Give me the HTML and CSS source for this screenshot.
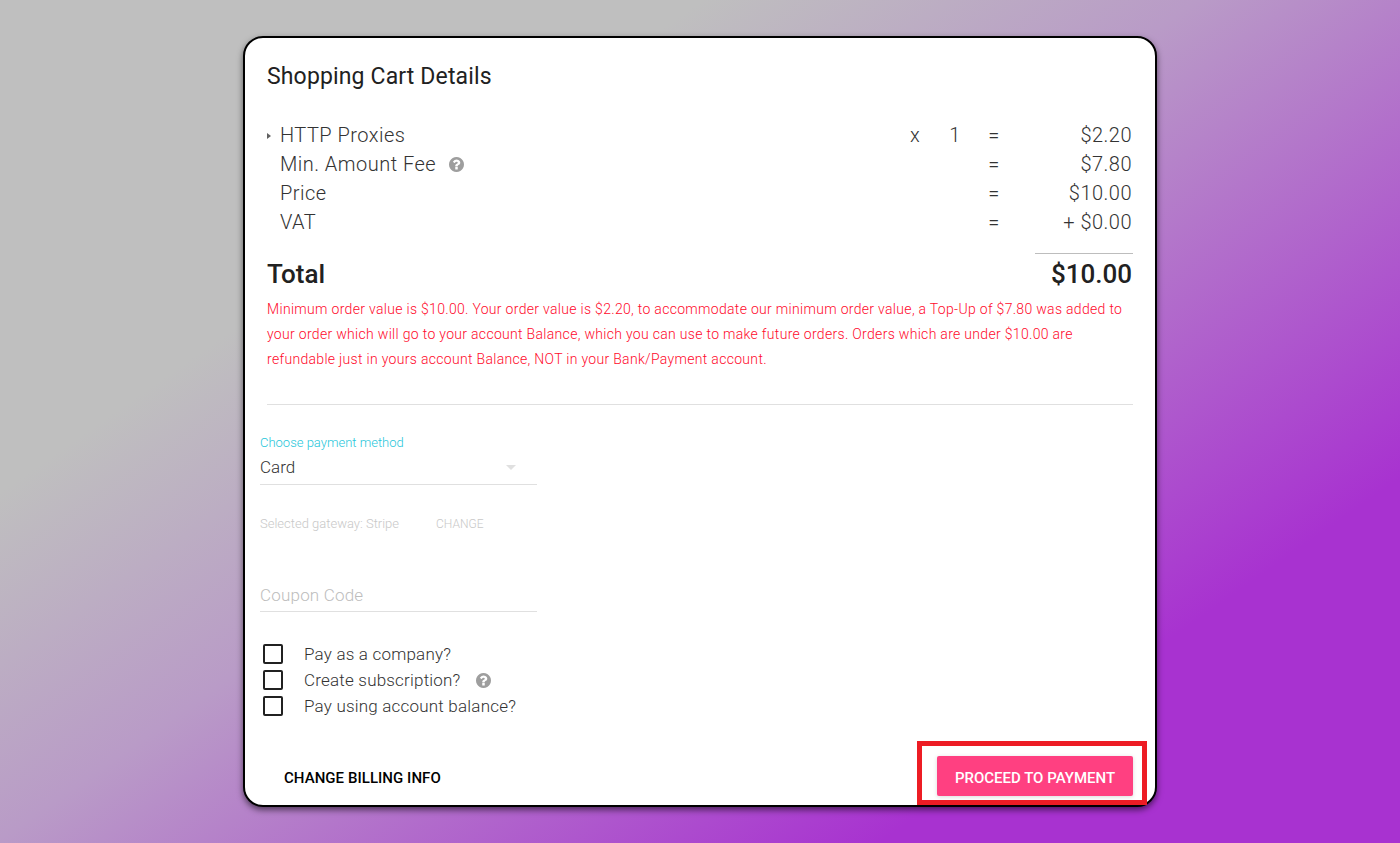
FILE: index.html
```html
<!DOCTYPE html>
<html lang="en">
<head>
<meta charset="utf-8">
<title>Shopping Cart Details</title>
<link rel="stylesheet" href="styles.css">
</head>
<body>
<main class="card">
  <h1 class="title">Shopping Cart Details</h1>
  <div class="lines">
    <div class="line">
      <span class="label"><svg class="caret" viewBox="0 0 4 6"><path d="M0 0l4 3-4 3z"/></svg>HTTP Proxies</span>
      <span class="times">x</span><span class="qty">1</span><span class="eq">=</span><span class="amount">$2.20</span>
    </div>
    <div class="line">
      <span class="label">Min. Amount Fee<svg class="help help-fee" viewBox="128 128 1536 1536"><path d="M1024 1376v-192q0-14-9-23t-23-9h-192q-14 0-23 9t-9 23v192q0 14 9 23t23 9h192q14 0 23-9t9-23zm256-672q0-88-55.500-163t-138.500-116-170-41q-243 0-371 213-15 24 8 42l132 100q7 6 19 6 16 0 25-12 53-68 86-92 34-24 86-24 48 0 85.500 26t37.500 59q0 38-20 61t-68 45q-63 28-115.500 86.500t-52.500 125.500v36q0 14 9 23t23 9h192q14 0 23-9t9-23q0-19 21.500-49.500t54.500-49.500q32-18 49-28.500t46-35 44.500-48 28-60.500 12.500-81zm384 192q0 209-103 385.500t-279.500 279.500-385.500 103-385.500-103-279.500-279.500-103-385.500 103-385.500 279.500-279.500 385.500-103 385.500 103 279.500 279.500 103 385.500z"/></svg></span>
      <span class="times"></span><span class="qty"></span><span class="eq">=</span><span class="amount">$7.80</span>
    </div>
    <div class="line">
      <span class="label">Price</span>
      <span class="times"></span><span class="qty"></span><span class="eq">=</span><span class="amount">$10.00</span>
    </div>
    <div class="line">
      <span class="label">VAT</span>
      <span class="times"></span><span class="qty"></span><span class="eq">=</span><span class="amount">+ $0.00</span>
    </div>
  </div>
  <div class="total-rule"></div>
  <div class="total"><span>Total</span><span class="total-value">$10.00</span></div>
  <p class="notice">Minimum order value is $10.00. Your order value is $2.20, to accommodate our minimum order value, a Top-Up of $7.80 was added to your order which will go to your account Balance, which you can use to make future orders. Orders which are under $10.00 are refundable just in yours account Balance, NOT in your Bank/Payment account.</p>
  <hr class="divider">
  <section class="form">
    <div class="field-label">Choose payment method</div>
    <div class="select"><span>Card</span><span class="arrow"></span></div>
    <div class="gateway"><span>Selected gateway: Stripe</span><span class="change">CHANGE</span></div>
    <div class="coupon">Coupon Code</div>
    <div class="checks">
      <div class="check"><span class="box"></span><span>Pay as a company?</span></div>
      <div class="check"><span class="box"></span><span>Create subscription?</span><svg class="help help-sub" viewBox="128 128 1536 1536"><path d="M1024 1376v-192q0-14-9-23t-23-9h-192q-14 0-23 9t-9 23v192q0 14 9 23t23 9h192q14 0 23-9t9-23zm256-672q0-88-55.500-163t-138.500-116-170-41q-243 0-371 213-15 24 8 42l132 100q7 6 19 6 16 0 25-12 53-68 86-92 34-24 86-24 48 0 85.500 26t37.500 59q0 38-20 61t-68 45q-63 28-115.500 86.500t-52.500 125.500v36q0 14 9 23t23 9h192q14 0 23-9t9-23q0-19 21.500-49.500t54.500-49.500q32-18 49-28.500t46-35 44.500-48 28-60.500 12.500-81zm384 192q0 209-103 385.500t-279.500 279.500-385.500 103-385.500-103-279.500-279.500-103-385.500 103-385.500 279.500-279.500 385.500-103 385.500 103 279.500 279.500 103 385.500z"/></svg></div>
      <div class="check"><span class="box"></span><span>Pay using account balance?</span></div>
    </div>
  </section>
  <footer class="actions">
    <button class="btn-flat" type="button">CHANGE BILLING INFO</button>
    <button class="btn-pay" type="button">PROCEED TO PAYMENT</button>
  </footer>
  <div class="highlight"></div>
</main>
</body>
</html>
```
FILE: styles.css
```css
* { box-sizing: border-box; }
html, body { height: 100%; }
body {
  margin: 0;
  height: 843px;
  overflow: hidden;
  padding-top: 36px;
  font-family: Roboto, "Liberation Sans", sans-serif;
  background: linear-gradient(145deg, #bfbfbf 27%, #b99bc7 46%, #a832d0 80%);
}
.card {
  position: relative;
  width: 914px;
  height: 771px;
  margin-left: 243px;
  padding: 0 22px;
  background: #fff;
  border: 2px solid #000;
  border-radius: 20px;
  box-shadow: 0 3px 6px rgba(0, 0, 0, .55);
}
.title {
  margin: 0;
  padding-top: 24px;
  font-size: 23px;
  line-height: 30px;
  font-weight: 400;
  letter-spacing: .15px;
  color: #212121;
}
.lines { margin-top: 29px; }
.line {
  display: grid;
  grid-template-columns: 1fr 20px 20px 57px 100px;
  height: 29px;
  line-height: 29px;
  font-size: 20px;
  font-weight: 300;
  letter-spacing: .48px;
  color: #333;
}
.label { position: relative; padding-left: 13px; display: flex; align-items: center; }
.caret { position: absolute; left: 0; top: 12px; width: 4px; height: 6px; fill: #616161; }
.times { text-align: center; margin-left: -62px; }
.qty { text-align: center; margin-left: -22px; }
.eq { text-align: center; margin-left: -21px; }
.amount { text-align: right; padding-right: 1px; }
.help { width: 15px; height: 15px; fill: #9e9e9e; }
.help-fee { margin-left: 13px; }
.help-sub { margin-left: 15px; }
.total-rule { width: 98px; height: 1px; margin: 16px 0 0 auto; background: #bdbdbd; }
.total {
  display: flex;
  justify-content: space-between;
  font-size: 26px;
  line-height: 40px;
  font-weight: 500;
  color: #212121;
}
.total-value { padding-right: 1px; }
.notice {
  margin: 3px 0 0;
  font-size: 14px;
  line-height: 25px;
  letter-spacing: .31px;
  color: #ff0a2c;
  font-weight: 300;
}
.divider { margin: 32px 0 0; border: 0; border-top: 1px solid #e0e0e0; }
.form { margin-left: -7px; }
.field-label { margin-top: 31px; font-size: 13px; line-height: 14px; color: #26c6da; font-weight: 300; }
.select {
  display: flex;
  justify-content: space-between;
  align-items: center;
  width: 277px;
  height: 35px;
  padding-right: 21px;
  border-bottom: 1px solid #e0e0e0;
  font-size: 17px;
  font-weight: 300;
  color: #333;
}
.arrow { width: 0; height: 0; border: 5.500px solid transparent; border-top: 5.500px solid #e0e0e0; border-bottom: 0; }
.gateway { margin-top: 31px; font-size: 13px; line-height: 16px; font-weight: 300; color: #c8c8c8; }
.change { margin-left: 37px; font-size: 12px; }
.coupon {
  width: 277px;
  margin-top: 47px;
  height: 33px;
  line-height: 32px;
  border-bottom: 1px solid #e0e0e0;
  font-size: 17px;
  letter-spacing: .2px;
  font-weight: 300;
  color: #bdbdbd;
}
.checks { margin-top: 29px; }
.check {
  display: flex;
  align-items: center;
  height: 26px;
  font-size: 17px;
  letter-spacing: .2px;
  font-weight: 300;
  color: #333;
}
.box {
  width: 20px;
  height: 20px;
  margin: 0 21px 0 3px;
  border: 2px solid #212121;
  border-radius: 2px;
}
.actions { display: flex; justify-content: space-between; align-items: center; margin-top: 37px; }
.btn-flat {
  margin: 4px 0 0 17px;
  padding: 0;
  border: 0;
  background: none;
  font: 500 15px/36px Roboto, "Liberation Sans", sans-serif;
  letter-spacing: .05px;
  color: #000;
}
.btn-pay {
  width: 196px;
  height: 40px;
  padding: 4px 0 0;
  border: 0;
  border-radius: 2px;
  background: #ff4081;
  color: #fff;
  font: 500 15px/36px Roboto, "Liberation Sans", sans-serif;
  box-shadow: 0 1px 4px rgba(0, 0, 0, .15);
}
.highlight {
  position: absolute;
  left: 672px;
  top: 703px;
  width: 230px;
  height: 64px;
  border: 5px solid #ed1c24;
  pointer-events: none;
}
```
